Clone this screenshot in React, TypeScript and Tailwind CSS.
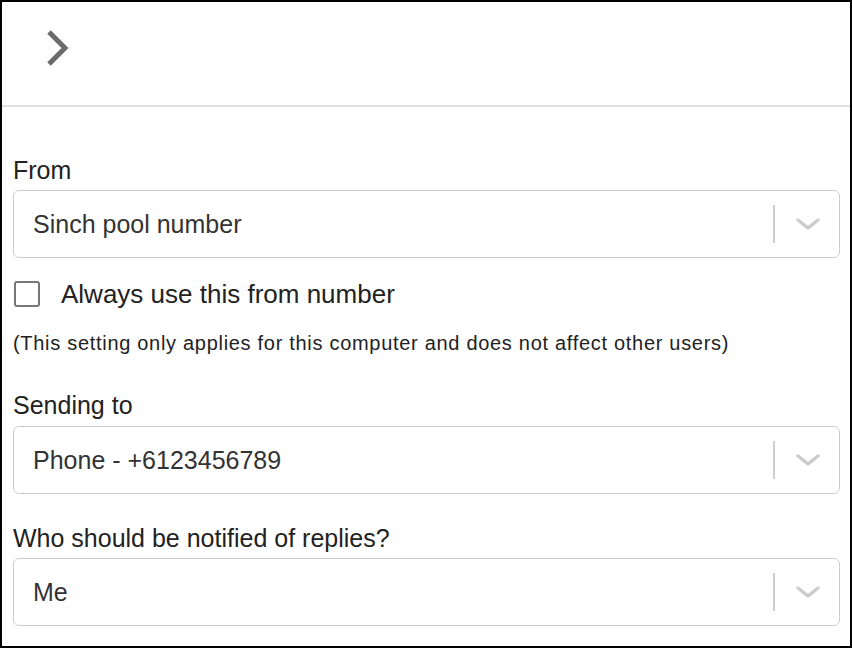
const font = { fontFamily: '"Liberation Sans", Arial, sans-serif' };

function Select({ value }: { value: string }) {
  return (
    <div className="flex h-[68px] items-center rounded-[6px] border border-[#cccccc] bg-white">
      <div className="flex-1 pl-[19px] text-[25px] leading-[28px] text-[#333333]">{value}</div>
      <div className="h-[38px] w-[2px] bg-[#cccccc]" />
      <div className="flex w-[64px] items-center justify-center pl-[2px]">
        <svg width="24" height="14" viewBox="0 0 24 14" fill="none">
          <path d="M2 3 L12 11 L22 3" stroke="#cccccc" strokeWidth="3.5" strokeLinecap="round" strokeLinejoin="round" />
        </svg>
      </div>
    </div>
  );
}

export default function App() {
  return (
    <div className="h-[648px] w-[852px] border-2 border-black bg-white text-[#222222]" style={font}>
      <div className="flex h-[105px] items-center border-b-2 border-[#e0e0e0] pl-[44px]">
        <svg width="24" height="36" viewBox="0 0 24 36" fill="none" className="mt-[-12px]">
          <path d="M3 2 L19 18 L3 34" stroke="#6b6b6b" strokeWidth="5" strokeLinejoin="miter" />
        </svg>
      </div>
      <div className="pl-[11px] pr-[10px] pt-[49px]">
        <div className="text-[25px] leading-[28px]">From</div>
        <div className="mt-[6px]">
          <Select value="Sinch pool number" />
        </div>
        <label className="mt-[22px] flex h-[28px] items-center">
          <span className="ml-[1px] h-[26px] w-[26px] rounded-[3px] border-[2.5px] border-[#777777] bg-white" />
          <span className="ml-[21px] text-[26px] leading-[28px]">Always use this from number</span>
        </label>
        <div className="mt-[23px] text-[20px] leading-[24px] tracking-[0.7px]">
          (This setting only applies for this computer and does not affect other users)
        </div>
        <div className="mt-[36px] text-[25px] leading-[28px]">Sending to</div>
        <div className="mt-[7px]">
          <Select value="Phone - +6123456789" />
        </div>
        <div className="mt-[30px] text-[25px] leading-[28px]">Who should be notified of replies?</div>
        <div className="mt-[6px]">
          <Select value="Me" />
        </div>
      </div>
    </div>
  );
}
